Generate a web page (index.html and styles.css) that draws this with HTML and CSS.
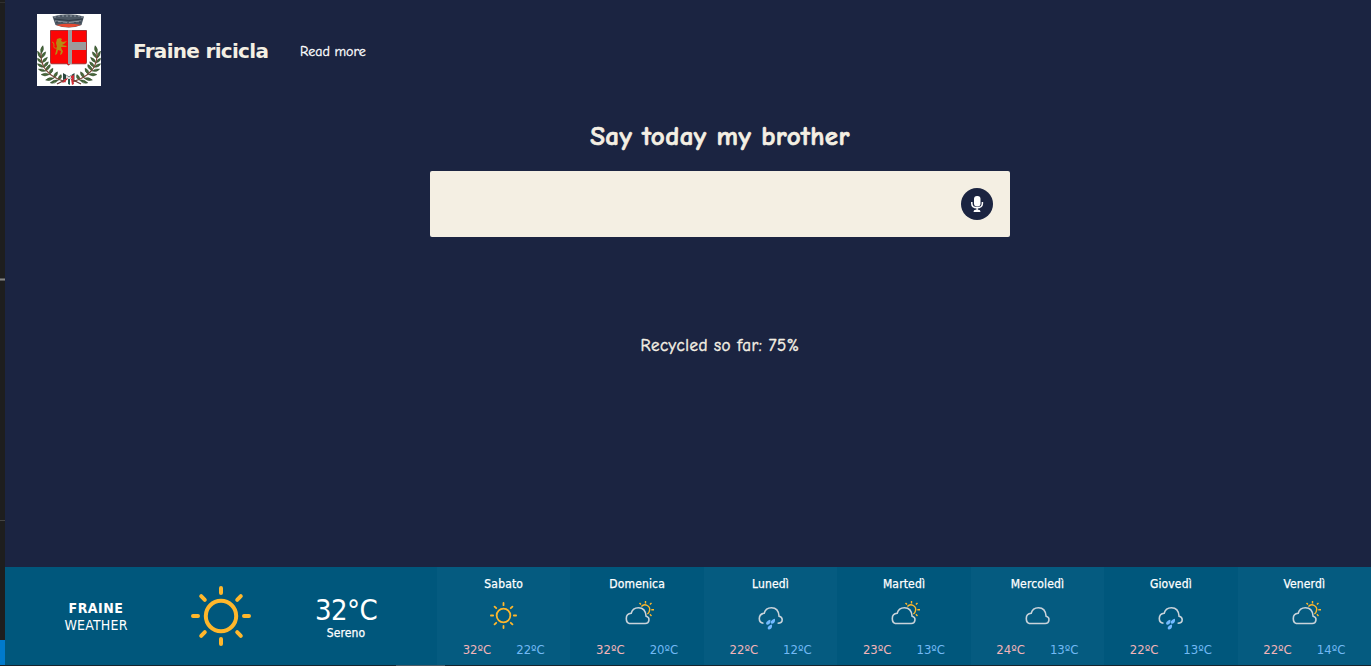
FILE: index.html
```html
<!DOCTYPE html>
<html lang="it">
<head>
<meta charset="utf-8">
<title>Fraine ricicla</title>
<link rel="stylesheet" href="styles.css">
</head>
<body>
<svg class="defs" width="0" height="0" aria-hidden="true">
  <defs>
    <symbol id="sun" viewBox="0 0 60 60">
      <g fill="none" stroke="#ffb72b" stroke-width="4" stroke-linecap="round">
        <circle cx="30" cy="30" r="15.2"/>
        <path d="M30 2v5M30 53v5M2 30h5M53 30h5M10.2 10.2l3.6 3.6M46.2 46.2l3.6 3.6M10.2 49.8l3.6-3.6M46.2 13.8l3.6-3.6"/>
      </g>
    </symbol>
    <symbol id="cloud" viewBox="0 0 32 32">
      <path d="M7.3 24.5h15.9a3.7 3.7 0 0 0 .9-7.3C23.7 11.500 20.500 8.700 16.400 8.700c-3.900 0-6.400 2.400-7.200 5.600-2.800.2-4.900 2.300-4.900 5.200 0 2.800 1.400 4.600 3 5z" fill="none" stroke="#c9d3da" stroke-width="1.600"/>
    </symbol>
    <symbol id="partly" viewBox="0 0 32 32">
      <path d="M7.300 24.500h15.900a3.700 3.700 0 0 0 .9-7.300C23.700 11.500 20.500 8.700 16.400 8.700c-3.900 0-6.400 2.400-7.200 5.600-2.800.2-4.900 2.300-4.900 5.200 0 2.800 1.400 4.600 3 5z" fill="none" stroke="#c9d3da" stroke-width="1.600"/>
      <path d="M19.400 7.500a4.700 4.700 0 0 1 8 4.600c-.3 1.300-1.100 2.300-2.100 2.900M23.500 2v2.600M17.500 4l1.500 1.600M29.500 4l-1.600 1.600M29.300 10.800H32M27.900 15.300l1.600 1.600" fill="none" stroke="#ffb72b" stroke-width="1.400"/>
    </symbol>
    <symbol id="rain" viewBox="0 0 32 32">
      <path d="M8.500 24.300c-2.700-.2-4.200-2.200-4.200-4.700 0-2.900 2.100-5 4.900-5.300.8-3.200 3.300-5.600 7.200-5.600 4.100 0 7.300 2.800 7.700 8.500 2 .3 3.100 1.800 3.100 3.600 0 2.300-1.700 3.500-4.600 3.500" fill="none" stroke="#c9d3da" stroke-width="1.600"/>
      <g fill="#72b9ff">
        <path id="drop" d="M15.300 20.800c.7 2.500-.7 4.900-2.700 4.900-1.900 0-2.200-2.400.3-4 .9-.5 1.700-.8 2.400-.9z"/>
        <use href="#drop" x="4.600" y="-1"/>
        <use href="#drop" x="1.600" y="4.700"/>
      </g>
    </symbol>
    <symbol id="sprig" viewBox="0 0 32 44">
      <g fill="#496a3a" stroke="#2c422a" stroke-width=".5">
        <path d="M4 9Q2 4 6 0q2 5-2 9zM4 14Q0 12 0 6q4 2 4 8zM4 14q0-5 5-7 0 5-5 7zM5 19q-5-1-5-5 4 1 5 5zM5 19q1-5 6-6-1 5-6 6zM7 24q-6 0-7-4 5 0 7 4zM7 24q0-5 5-6 0 4-5 6zM9 28q-5 2-8-2 5-1 8 2zM9 28q0-5 5-7 1 4-5 7zM13 32q-5 3-9 0 5-3 9 0zM13 32q-1-5 4-7 1 4-4 7zM18 36q-4 4-9 2 4-4 9-2zM18 36q-1-5 4-7 1 4-4 7zM23 38q-4 5-9 3 4-4 9-3zM23 38q-1-4 3-6 2 4-3 6z"/>
      </g>
      <path d="M4 8C3 22 11 34 31 40" fill="none" stroke="#7b4938" stroke-width="1.200"/>
    </symbol>
  </defs>
</svg>
<div class="screen">
  <div class="editor-edge">
    <i class="edge-top"></i><i class="edge-handle"></i><i class="edge-line"></i><i class="edge-status"></i>
  </div>
  <div class="page">
    <header class="header">
      <svg class="crest" viewBox="0 0 64 72" role="img" aria-label="Stemma di Fraine">
        <rect width="64" height="72" fill="#fff"/>
        <path d="M15.500 2.500Q31 -2 47 2.500L44.500 11q-12.500 5-26 0z" fill="#4d5864"/>
        <path d="M18 2v2M22 1v2M26 1v2M30 1v2M34 1v2M38 1v2M42 1v2M45 2v2M18 7q14 3 26 0" fill="none" stroke="#99a2aa" stroke-width=".9"/>
        <path d="M17 5q15 3 29 0M20 7v2M25 8v1M31 8v1M38 8v1M43 7v2" fill="none" stroke="#2e3945" stroke-width="1"/>
        <path d="M19 11q12-2.500 25 0-12 4.600-25 0z" fill="#e64a32"/>
        <path d="M13.500 16.500h36v32q0 1.300-1.300 1.300H33l-1.500 1.500-1.500-1.500H14.800q-1.300 0-1.300-1.300z" fill="#fc0505" stroke="#8d2025" stroke-width=".8"/>
        <path d="M31 16h4v12h14v8H35v14h-4z" fill="#9c9a9b"/>
        <path d="M20 25l3-1 2 1-1 2 2 1 4-1-3 3-2 1 5 1-1 1-5 0 1 3 1 1-1 3-2 1 1-4-3-1-1 4-2 1 1-4 1-4-1-4z" fill="#b58b12"/>
        <path d="M20 34q-4 1-3-3 0-3-2-3" fill="none" stroke="#b58b12" stroke-width="1"/>
        <use href="#sprig" x="0" y="31.500" width="30" height="40"/>
        <use href="#sprig" x="0" y="31.500" width="30" height="40" transform="matrix(-1 0 0 1 64 0)"/>
        <path d="M20 70l10-5M44 70l-10-5" stroke="#67352d" stroke-width="1.200"/>
        <path d="M26 59l6 3.500 5.500-3.500v7l-5.500-2-6 2z" fill="#28453f"/>
        <path d="M29 61l3 2 3-2v4l-3-1-3 1z" fill="#ddd"/>
        <path d="M34 62l3-1v5l-3-2zM28 65l-3 4 3-1 3-4M34 65l1 6 2-1-1-5" fill="#d52b35"/>
        <path d="M31 65v5l2 1v-6" fill="#28594a"/>
      </svg>
      <span class="brand">Fraine ricicla</span>
      <a class="read-more">Read more</a>
    </header>
    <main class="main">
      <h1 class="title">Say today my brother</h1>
      <div class="search">
        <button class="mic" aria-label="Voice">
          <svg width="14" height="18" viewBox="0 0 14 18"><rect x="4" y="1" width="6.500" height="10.500" rx="3" fill="#fff"/><path d="M1.800 7v1.500c0 2.700 2.300 4.300 5.300 4.300s5.300-1.600 5.300-4.300V7M7.100 12.500V15" fill="none" stroke="#fff" stroke-width="1.500"/><path d="M3.500 17q0-2.300 2-2.300h3q2 0 2 2.300z" fill="#fff"/></svg>
        </button>
      </div>
      <p class="progress">Recycled so far: 75%</p>
    </main>
    <footer class="weather">
      <section class="current">
        <div class="place"><b>FRAINE</b><span>WEATHER</span></div>
        <svg class="big-sun"><use href="#sun"/></svg>
        <div class="now"><span class="degrees">32°C</span><span class="condition">Sereno</span></div>
      </section>
      <section class="days">
        <article class="day"><h2>Sabato</h2><svg class="small-sun"><use href="#sun"/></svg><p><span class="high">32ºC</span><span class="low">22ºC</span></p></article>
        <article class="day"><h2>Domenica</h2><svg><use href="#partly"/></svg><p><span class="high">32ºC</span><span class="low">20ºC</span></p></article>
        <article class="day"><h2>Lunedì</h2><svg><use href="#rain"/></svg><p><span class="high">22ºC</span><span class="low">12ºC</span></p></article>
        <article class="day"><h2>Martedì</h2><svg><use href="#partly"/></svg><p><span class="high">23ºC</span><span class="low">13ºC</span></p></article>
        <article class="day"><h2>Mercoledì</h2><svg><use href="#cloud"/></svg><p><span class="high">24ºC</span><span class="low">13ºC</span></p></article>
        <article class="day"><h2>Giovedì</h2><svg><use href="#rain"/></svg><p><span class="high">22ºC</span><span class="low">13ºC</span></p></article>
        <article class="day"><h2>Venerdì</h2><svg><use href="#partly"/></svg><p><span class="high">22ºC</span><span class="low">14ºC</span></p></article>
      </section>
    </footer>
    <div class="taskbar"><i></i></div>
  </div>
</div>
</body>
</html>
```
FILE: styles.css
```css
* { box-sizing: border-box; }
body { margin: 0; overflow: hidden; background: #1b2441; font-family: "DejaVu Sans Condensed", "DejaVu Sans", sans-serif; }
h1, h2, p { margin: 0; }
.defs { position: absolute; }
.screen { display: flex; width: 1371px; height: 666px; }
.editor-edge { display: flex; flex-direction: column; width: 5px; background: #1e1e1e; }
.edge-top { height: 3px; border-bottom: 1px solid #303030; }
.edge-handle { height: 3px; margin-top: 275px; background: #858585; border: solid #555; border-width: 1px 0; }
.edge-line { height: 1px; margin-top: 239px; background: #444; }
.edge-status { height: 25px; margin-top: 119px; background: #007acc; }
.page { display: flex; flex-direction: column; width: 1366px; background: #1b2441; }
.header { display: flex; align-items: center; height: 100px; padding-left: 32px; }
.crest { width: 64px; height: 72px; }
.brand { width: 135px; margin-left: 32px; color: #f4efe3; font: bold 20px/24px "DejaVu Sans", sans-serif; letter-spacing: -0.7px; white-space: nowrap; padding-top: 1px; }
.read-more { margin-left: 32px; padding-top: 4px; color: #fff; font: 14px/20px "Comic Sans MS", "Comic Neue", Lato, sans-serif; -webkit-text-stroke: .3px; }
.main { display: flex; flex: 1; flex-direction: column; align-items: center; padding: 17px 0 0 64px; color: #f4efe3; font-family: "Comic Sans MS", "Comic Neue", Lato, sans-serif; }
.title { font-size: 27px; line-height: 39px; letter-spacing: .4px; -webkit-text-stroke: .7px; }
.search { display: flex; align-items: center; justify-content: flex-end; width: 580px; height: 66px; margin-top: 15px; padding-right: 17px; border-radius: 2px; background: #f4efe3; }
.mic { display: grid; place-items: center; width: 32px; height: 32px; padding: 0; border: 0; border-radius: 50%; background: #1b2441; }
.progress { margin-top: 97px; font-size: 17px; line-height: 24px; letter-spacing: .5px; -webkit-text-stroke: .45px; }
.weather { display: flex; height: 98px; background: #00577c; color: #fff; }
.current { display: flex; align-items: center; width: 432px; padding-left: 49px; }
.place { display: flex; flex-direction: column; width: 84px; align-items: center; padding-top: 2px; font-size: 14px; line-height: 17px; }
.place b { letter-spacing: .5px; }
.place span { letter-spacing: .2px; }
.big-sun { width: 60px; height: 60px; margin-left: 53px; }
.now { display: flex; flex-direction: column; align-items: center; width: 100px; margin-left: 45px; padding-top: 5px; }
.degrees { font-size: 29px; line-height: 28px; letter-spacing: -.6px; }
.condition { font-size: 12px; line-height: 18px; letter-spacing: .1px; -webkit-text-stroke: .25px; }
.days { display: grid; flex: 1; grid-template-columns: repeat(7, 1fr); }
.day { display: flex; flex-direction: column; align-items: center; padding-top: 9px; }
.day:nth-child(odd) { background: #055b80; }
.day h2 { font-size: 12px; font-weight: 400; line-height: 17px; letter-spacing: .15px; -webkit-text-stroke: .25px; }
.day svg { width: 32px; height: 32px; margin: 6px 0 0 1px; }
.day .small-sun { width: 27px; height: 27px; margin: 9px 0 2px; }
.day p { display: flex; gap: 25px; margin-top: 10px; font-size: 13px; line-height: 18px; letter-spacing: 0; }
.high { color: #f3b4b8; }
.low { color: #72b9f5; }
.taskbar { height: 1px; padding-left: 391px; background: #17242d; }
.taskbar i { display: block; width: 49px; height: 1px; background: #4c5962; }
```
